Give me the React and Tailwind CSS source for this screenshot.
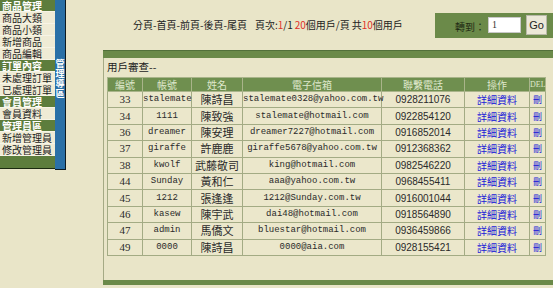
import React from 'react';

const menu = [
  { t: '商品管理', h: true },
  { t: '商品大類' },
  { t: '商品小類' },
  { t: '新增商品' },
  { t: '商品編輯' },
  { t: '訂單內容', h: true },
  { t: '未處理訂單' },
  { t: '已處理訂單' },
  { t: '會員管理', h: true },
  { t: '會員資料' },
  { t: '管理員區', h: true },
  { t: '新增管理員' },
  { t: '修改管理員' },
];

const users = [
  ['33', 'stalemate', '陳詩昌', 'stalemate0328@yahoo.com.tw', '0928211076'],
  ['34', '1111', '陳致強', 'stalemate@hotmail.com', '0922854120'],
  ['36', 'dreamer', '陳安理', 'dreamer7227@hotmail.com', '0916852014'],
  ['37', 'giraffe', '許鹿鹿', 'giraffe5678@yahoo.com.tw', '0912368362'],
  ['38', 'kwolf', '武藤敬司', 'king@hotmail.com', '0982546220'],
  ['44', 'Sunday', '黃和仁', 'aaa@yahoo.com.tw', '0968455411'],
  ['45', '1212', '張逢逢', '1212@Sunday.com.tw', '0916001044'],
  ['46', 'kasew', '陳宇武', 'dai48@hotmail.com', '0918564890'],
  ['47', 'admin', '馬僑文', 'bluestar@hotmail.com', '0936459866'],
  ['49', '0000', '陳詩昌', '0000@aia.com', '0928155421'],
];

const cjk = "font-['Noto_Sans_CJK_TC','Noto_Sans_CJK_SC',sans-serif]";

function Sidebar() {
  return (
    <div className="flex items-start shrink-0">
      <div className="w-[55px] flex flex-col">
        {menu.map((m) => (
          <div
            key={m.t}
            className={
              'h-[12px] pl-[2px] text-[10px] leading-[11px] whitespace-nowrap border-b border-[#f7f4e6] ' +
              (m.h ? 'bg-[#5d7d3c] text-white font-bold' : 'bg-[#efebd5] text-[#1a1a1a]')
            }
          >
            {m.t}
          </div>
        ))}
        <div className="h-[13px] bg-[#5d7d3c] border-b border-[#1b2a10]" />
      </div>
      <div className="w-[11px] h-[170px] bg-[#2a70a7] border-r border-b border-[#0d1a22] flex flex-col items-center pt-[59px]">
        {['管', '理', '導', '區'].map((c) => (
          <div key={c} className="w-full text-center text-white font-bold text-[9px] leading-[10px]">{c}</div>
        ))}
      </div>
    </div>
  );
}

export default function App() {
  return (
    <div className={`w-[553px] h-[288px] overflow-hidden bg-[#e9e5c8] flex ${cjk}`}>
      <Sidebar />
      <div className="flex-1 min-w-0 flex flex-col">
        <div className="h-[50px] flex items-center justify-between pl-[67px]">
          <div className="text-[10px] text-[#222] whitespace-nowrap pb-[2px]">
            分頁-首頁-前頁-後頁-尾頁
            <span className="ml-[8px]">頁次:<span className="text-[#e0302a]">1</span>/1</span>
            <span className="ml-[2px]"><span className="text-[#e0302a]">20</span>個用戶/頁</span>
            <span className="ml-[2px]">共<span className="text-[#e0302a]">10</span>個用戶</span>
          </div>
          <div className="w-[118px] h-[25px] bg-[#6b8a49] flex items-center pl-[20px] gap-[3px] shrink-0">
            <span className="text-[10px] text-[#1f2a14] mt-[3px]">轉到：</span>
            <div className="w-[33px] h-[16px] bg-white border border-[#c8c8c8] text-[10px] leading-[14px] pl-[3px] font-['Liberation_Serif',serif] text-[#333]">1</div>
            <div className="ml-[2px] w-[21px] h-[20px] bg-[#ece8d8] border border-[#b8b8a8] text-[11px] leading-[18px] text-center text-[#222] font-['Liberation_Sans',sans-serif]">Go</div>
          </div>
        </div>
        <div className="ml-[37px] w-[460px] flex flex-col">
          <div className="h-[8px] bg-[#6b8a49] border-t border-[#52703a]" />
          <div className="h-[222px] border-l border-[#a5aa85] pl-[3px]">
            <div className="h-[19px] text-[10.5px] leading-[18px] text-[#222]">用戶審查--</div>
            <table className="border-collapse border border-[#a3ab84] w-[438px] text-[10.5px] table-fixed">
              <colgroup>
                <col className="w-[35px]" />
                <col className="w-[49px]" />
                <col className="w-[51px]" />
                <col className="w-[139px]" />
                <col className="w-[83px]" />
                <col className="w-[65px]" />
                <col className="w-[16px]" />
              </colgroup>
              <thead>
                <tr className="h-[14px] bg-[#6f8f4f] text-[#dfe8cc]">
                  {['編號', '帳號', '姓名', '電子信箱', '聯繫電話', '操作'].map((h) => (
                    <th key={h} className="font-normal text-[10px] leading-[12px] border border-[#a9b48a] p-0">{h}</th>
                  ))}
                  <th className="font-normal text-[8px] leading-[12px] border border-[#a9b48a] p-0 font-['Liberation_Serif',serif]">DEL</th>
                </tr>
              </thead>
              <tbody>
                {users.map((u) => (
                  <tr key={u[0]} className="h-[16.4px] bg-[#ebe7cb] text-[#2a2a2a] text-center">
                    <td className="border border-[#a3ab84] p-0 font-['Liberation_Serif',serif] text-[11px] leading-[15px]">{u[0]}</td>
                    <td className="border border-[#a3ab84] p-0 font-['Liberation_Mono',monospace] text-[9px] leading-[15px] whitespace-nowrap">{u[1]}</td>
                    <td className="border border-[#a3ab84] p-0 text-[11px] leading-[15px] whitespace-nowrap">{u[2]}</td>
                    <td className="border border-[#a3ab84] p-0 font-['Liberation_Mono',monospace] text-[9px] leading-[15px] whitespace-nowrap">{u[3]}</td>
                    <td className="border border-[#a3ab84] p-0 font-['Liberation_Sans',sans-serif] text-[10px] leading-[15px]">{u[4]}</td>
                    <td className="border border-[#a3ab84] p-0 text-[10px] leading-[15px] text-[#2020d8]">詳細資料</td>
                    <td className="border border-[#a3ab84] p-0 text-[9px] leading-[15px] text-[#2020d8]">刪</td>
                  </tr>
                ))}
              </tbody>
            </table>
          </div>
          <div className="h-[5px] bg-[#6b8a49]" />
        </div>
      </div>
    </div>
  );
}
